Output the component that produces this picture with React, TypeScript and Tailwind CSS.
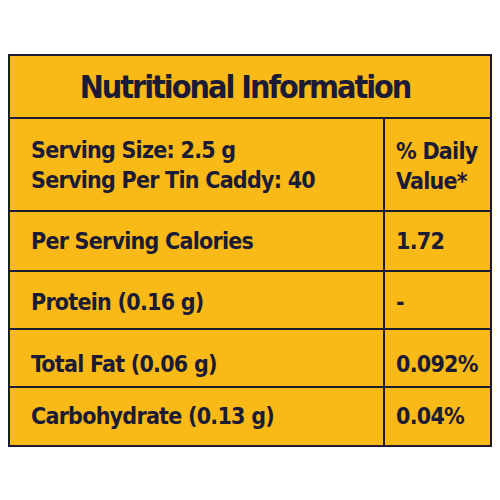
import React from 'react';

const rows = [
  { label: 'Per Serving Calories', value: '1.72', h: 'h-[60px]', pad: '' },
  { label: 'Protein (0.16 g)', value: '-', h: 'h-[58px]', pad: 'pt-[4px]' },
  { label: 'Total Fat (0.06 g)', value: '0.092%', h: 'h-[58px]', pad: 'pt-[12px]' },
  { label: 'Carbohydrate (0.13 g)', value: '0.04%', h: 'h-[59px]', pad: '' },
];

const App: React.FC = () => {
  return (
    <div className="w-[500px] h-[500px] bg-white pt-[54px] pl-[8px]" style={{ fontFamily: '"DejaVu Sans Condensed", "DejaVu Sans", sans-serif' }}>
      <div className="w-[484px] border-2 border-[#1c1c30] bg-[#f9b916] text-[#1b1b35] font-bold tracking-[-0.75px]">
        {/* title */}
        <div className="h-[61px] flex items-center justify-center pr-[10px] text-[32px] tracking-[-2px]">
          Nutritional Information
        </div>

        {/* serving row */}
        <div className="flex border-t-2 border-[#1c1c30] h-[93px]">
          <div className="w-[375px] border-r-2 border-[#1c1c30] pl-[21px] flex flex-col justify-center text-[23px] leading-[30px]">
            <span>Serving Size: 2.5 g</span>
            <span>Serving Per Tin Caddy: 40</span>
          </div>
          <div className="flex-1 pl-[11px] flex flex-col justify-center text-[23px] leading-[30px] pt-[2px]">
            <span>% Daily</span>
            <span>Value*</span>
          </div>
        </div>

        {rows.map((r) => (
          <div key={r.label} className={`flex border-t-2 border-[#1c1c30] ${r.h}`}>
            <div className={`w-[375px] border-r-2 border-[#1c1c30] pl-[21px] flex items-center text-[23px] ${r.pad}`}>
              {r.label}
            </div>
            <div className={`flex-1 pl-[11px] flex items-center text-[23px] ${r.pad}`}>{r.value}</div>
          </div>
        ))}
      </div>
    </div>
  );
};

export default App;
